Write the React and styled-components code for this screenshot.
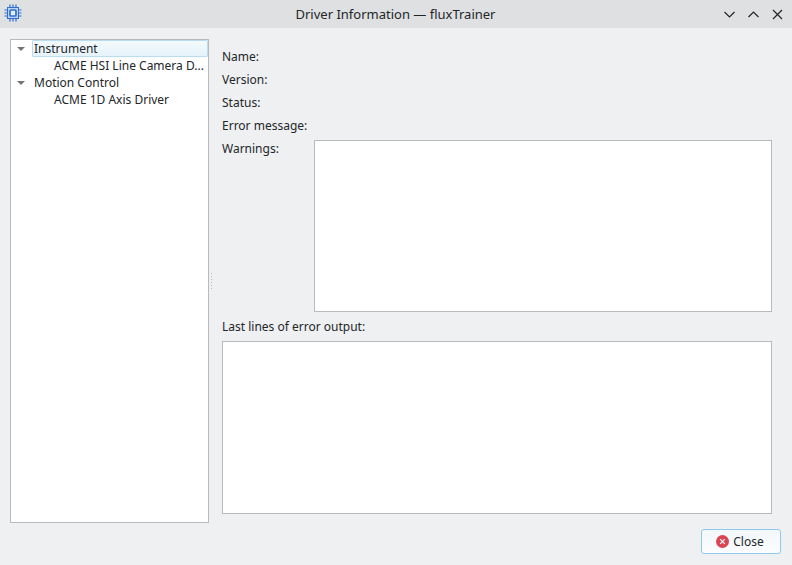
import React from "react";
import styled, { createGlobalStyle } from "styled-components";

const GlobalStyle = createGlobalStyle`
  html, body {
    margin: 0;
    padding: 0;
    overflow: hidden;
  }
  body {
    font-family: "Noto Sans", sans-serif;
    font-size: 12px;
    color: #232629;
  }
`;

const Window = styled.div`
  width: 792px;
  height: 565px;
  display: flex;
  flex-direction: column;
  background: #eff0f1;
`;

const TitleBar = styled.div`
  height: 28px;
  flex: none;
  display: flex;
  align-items: center;
  background: #dee0e2;
  padding: 0 8px 0 4px;
`;

const TitleText = styled.div`
  flex: 1;
  text-align: center;
  font-size: 13px;
  padding-left: 46px;
`;

const TitleButtons = styled.div`
  display: flex;
  gap: 11px;
`;

const TitleButton = styled.svg`
  width: 13px;
  height: 13px;
  fill: none;
  stroke: #232629;
  stroke-width: 1.2;
`;

const Body = styled.div`
  flex: 1;
  display: flex;
  padding: 11px 20px 0 10px;
  min-height: 0;
`;

const TreePanel = styled.div`
  width: 199px;
  height: 484px;
  box-sizing: border-box;
  flex: none;
  background: #fff;
  border: 1px solid #b8babc;
`;

const TreeRow = styled.div`
  height: 17px;
  display: flex;
  align-items: center;
  line-height: 17px;
  white-space: nowrap;
  padding-left: ${(p) => (p.$child ? "43px" : "5px")};
`;

const Caret = styled.span`
  width: 0;
  height: 0;
  border-left: 4px solid transparent;
  border-right: 4px solid transparent;
  border-top: 4px solid #70757a;
  margin-right: 7px;
  margin-left: 1px;
`;

const RowLabel = styled.span`
  flex: ${(p) => (p.$selected ? 1 : "none")};
  height: 17px;
  box-sizing: border-box;
  padding-left: ${(p) => (p.$selected ? "1px" : "2px")};
  background: ${(p) => (p.$selected ? "linear-gradient(#f4fafd, #e6f3fa)" : "none")};
  border: ${(p) => (p.$selected ? "1px solid #b9dcef" : "none")};
  border-radius: 1px;
  line-height: ${(p) => (p.$selected ? "15px" : "17px")};
`;

const Splitter = styled.div`
  width: 13px;
  flex: none;
  display: flex;
  align-items: center;
  height: 484px;
`;

const SplitDots = styled.div`
  display: flex;
  flex-direction: column;
  gap: 2px;
  margin-left: 2px;
`;

const Dot = styled.span`
  width: 1px;
  height: 1px;
  background: #b4b6b8;
`;

const Details = styled.div`
  flex: 1;
  display: flex;
  flex-direction: column;
  min-width: 0;
  padding-top: 6px;
`;

const Field = styled.div`
  height: 23px;
  display: flex;
  align-items: center;
`;

const WarningsRow = styled.div`
  display: grid;
  grid-template-columns: 92px 1fr;
  height: 172px;
  margin-top: 3px;
`;

const WarningsLabel = styled.div`
  line-height: 17px;
`;

const OutputBox = styled.div`
  box-sizing: border-box;
  background: #fff;
  border: 1px solid #b8babc;
  height: ${(p) => p.$height}px;
`;

const LastLinesLabel = styled.div`
  height: 29px;
  display: flex;
  align-items: center;
`;

const Footer = styled.div`
  display: flex;
  justify-content: flex-end;
  margin: 15px -9px 0 0;
`;

const CloseButton = styled.button`
  width: 80px;
  height: 25px;
  box-sizing: border-box;
  display: flex;
  align-items: center;
  justify-content: center;
  gap: 4px;
  padding: 0 2px 0 0;
  font: inherit;
  color: #232629;
  border: 1px solid #8fcaec;
  border-radius: 3px;
  background: linear-gradient(#f1f8fd, #fcfcfd);
`;

const ChipSvg = styled.svg`
  width: 18px;
  height: 18px;
  margin-bottom: 2px;
  stroke: #2f6fd0;
`;

const ChipIcon = () => (
  <ChipSvg viewBox="0 0 18 18">
    <rect x="3.5" y="3.5" width="11" height="11" fill="#bcd3f0" strokeWidth="1" />
    <rect x="6" y="6" width="6" height="6" rx="1" fill="#e4edf8" strokeWidth="1.7" />
    <path
      d="M6 0.5v3M9 0.5v3M12 0.5v3M6 14.5v3M9 14.5v3M12 14.5v3M0.5 6h3M0.5 9h3M0.5 12h3M14.5 6h3M14.5 9h3M14.5 12h3"
      fill="none"
      strokeWidth="1.2"
    />
  </ChipSvg>
);

const CloseIcon = () => (
  <svg width="13" height="13" viewBox="0 0 13 13">
    <circle cx="6.5" cy="6.5" r="6.5" fill="#da4453" />
    <path d="M4.2 4.2l4.6 4.6M8.8 4.2l-4.6 4.6" stroke="#fff" strokeWidth="1.2" />
  </svg>
);

function App() {
  return (
    <Window>
      <GlobalStyle />
      <TitleBar>
        <ChipIcon />
        <TitleText>Driver Information — fluxTrainer</TitleText>
        <TitleButtons>
          <TitleButton viewBox="0 0 13 13">
            <path d="M1.5 4l5 5 5-5" />
          </TitleButton>
          <TitleButton viewBox="0 0 13 13">
            <path d="M1.5 9l5-5 5 5" />
          </TitleButton>
          <TitleButton viewBox="0 0 13 13">
            <path d="M2 2l9 9M11 2l-9 9" />
          </TitleButton>
        </TitleButtons>
      </TitleBar>
      <Body>
        <TreePanel>
          <TreeRow>
            <Caret />
            <RowLabel $selected>Instrument</RowLabel>
          </TreeRow>
          <TreeRow $child>ACME HSI Line Camera D...</TreeRow>
          <TreeRow>
            <Caret />
            <RowLabel>Motion Control</RowLabel>
          </TreeRow>
          <TreeRow $child>ACME 1D Axis Driver</TreeRow>
        </TreePanel>
        <Splitter>
          <SplitDots>
            {[0, 1, 2, 3, 4, 5].map((i) => (
              <Dot key={i} />
            ))}
          </SplitDots>
        </Splitter>
        <Details>
          <Field>Name:</Field>
          <Field>Version:</Field>
          <Field>Status:</Field>
          <Field>Error message:</Field>
          <WarningsRow>
            <WarningsLabel>Warnings:</WarningsLabel>
            <OutputBox $height={172} />
          </WarningsRow>
          <LastLinesLabel>Last lines of error output:</LastLinesLabel>
          <OutputBox $height={173} />
          <Footer>
            <CloseButton>
              <CloseIcon />
              Close
            </CloseButton>
          </Footer>
        </Details>
      </Body>
    </Window>
  );
}

export default App;
